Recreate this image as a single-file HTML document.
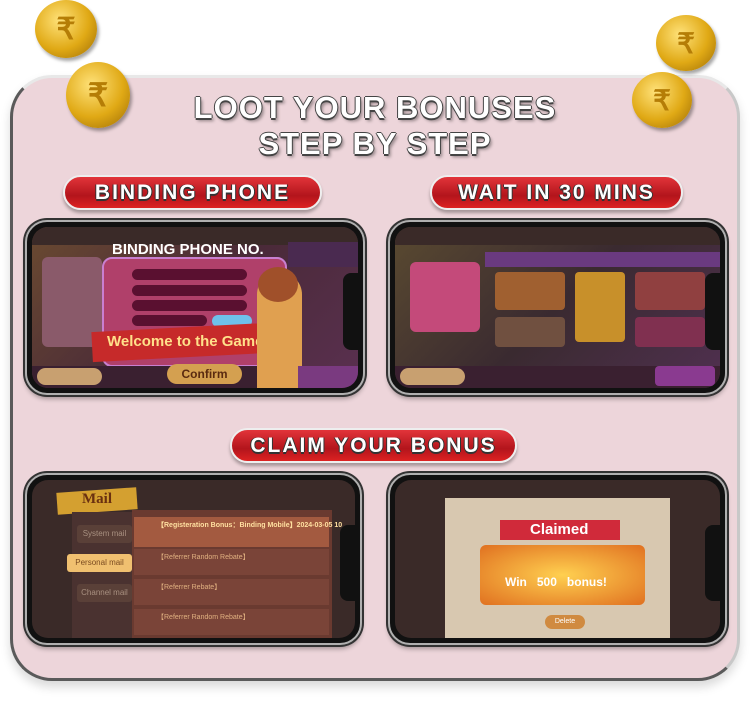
<!DOCTYPE html>
<html><head><style>
*{margin:0;padding:0;box-sizing:border-box}
body{width:750px;height:717px;background:#fff;position:relative;overflow:hidden;font-family:"Liberation Sans",sans-serif}
.card{position:absolute;left:10px;top:75px;width:730px;height:606px;border-radius:42px;background:#edd5da;border:3px solid #5a5a5a;border-top-color:#e8e8e8;border-right-color:#c8c8c8;box-shadow:0 6px 10px rgba(0,0,0,.15)}
.coin{position:absolute;border-radius:50%;background:radial-gradient(circle at 40% 35%,#ffe27a,#e0a915 55%,#9a6a05);box-shadow:2px 3px 3px rgba(0,0,0,.35)}
.coin span{position:absolute;inset:0;display:flex;align-items:center;justify-content:center;color:#b57d06;font-weight:bold}
.title{position:absolute;left:0;width:750px;text-align:center;color:#fff;font-weight:900;font-size:31px;letter-spacing:1px;text-shadow:0 2px 0 #444,1px 0 0 #444,-1px 0 0 #444,0 -1px 0 #444,2px 3px 3px rgba(0,0,0,.4)}
.pill{position:absolute;height:35px;border-radius:18px;background:linear-gradient(#e2343a,#b3151c 60%,#d22);border:2px solid #eee;box-shadow:0 3px 3px rgba(0,0,0,.3);color:#fff;font-weight:900;font-size:21px;letter-spacing:2px;text-align:center;line-height:31px;text-shadow:0 2px 0 #333,1px 0 0 #333,-1px 0 0 #333}
.phone{position:absolute;border-radius:22px;background:#111;border:2px solid #b0b0b0;box-shadow:0 0 0 2px #333,0 4px 5px rgba(0,0,0,.3)}
.scr{position:absolute;left:5px;top:5px;right:5px;bottom:5px;border-radius:16px;overflow:hidden}
.notch{position:absolute;right:4px;top:30%;width:16px;height:45%;background:#111;border-radius:8px 0 0 8px}
.t{position:absolute;font-weight:bold}
</style></head><body>
<div class="card"></div>
<div class="coin" style="left:35px;top:0;width:62px;height:58px"><span style="font-size:30px">₹</span></div>
<div class="coin" style="left:66px;top:62px;width:64px;height:66px"><span style="font-size:32px">₹</span></div>
<div class="coin" style="left:656px;top:15px;width:60px;height:56px"><span style="font-size:28px">₹</span></div>
<div class="coin" style="left:632px;top:72px;width:60px;height:56px"><span style="font-size:28px">₹</span></div>
<div class="title" style="top:90px">LOOT YOUR BONUSES</div>
<div class="title" style="top:126px">STEP BY STEP</div>
<div class="pill" style="left:63px;top:175px;width:259px">BINDING PHONE</div>
<div class="pill" style="left:430px;top:175px;width:253px">WAIT IN 30 MINS</div>
<div class="pill" style="left:230px;top:428px;width:287px">CLAIM YOUR BONUS</div>

<div class="phone" style="left:25px;top:220px;width:340px;height:175px">
 <div class="scr" style="background:linear-gradient(135deg,#6a4a30,#4a2a38 50%,#5a3050)">
  <div style="position:absolute;left:0;top:0;width:100%;height:18px;background:#3a2a28"></div>
  <div style="position:absolute;left:10px;top:30px;width:60px;height:90px;background:#8a5a6a;border-radius:6px"></div>
  <div style="position:absolute;left:70px;top:30px;width:185px;height:110px;background:#b0406a;border-radius:10px;border:2px solid #c97fd0"></div>
  <div class="t" style="left:80px;top:14px;color:#fff;font-size:15px">BINDING PHONE NO.</div>
  <div style="position:absolute;left:100px;top:42px;width:115px;height:11px;background:#5a1030;border-radius:6px"></div>
  <div style="position:absolute;left:100px;top:58px;width:115px;height:11px;background:#5a1030;border-radius:6px"></div>
  <div style="position:absolute;left:100px;top:73px;width:115px;height:11px;background:#5a1030;border-radius:6px"></div>
  <div style="position:absolute;left:100px;top:88px;width:75px;height:11px;background:#5a1030;border-radius:6px"></div>
  <div style="position:absolute;left:180px;top:88px;width:40px;height:12px;background:#6fc0ea;border-radius:6px"></div>
  <div style="position:absolute;left:60px;top:100px;width:195px;height:30px;background:#c62a2a;transform:rotate(-3deg)"></div>
  <div class="t" style="left:75px;top:106px;color:#ffe08a;font-size:15px">Welcome to the Game!</div>
  <div style="position:absolute;left:0;bottom:0;width:100%;height:22px;background:#3a2030"></div>
  <div style="position:absolute;left:5px;bottom:3px;width:65px;height:17px;background:#c8a070;border-radius:9px"></div>
  <div style="position:absolute;left:135px;bottom:4px;width:75px;height:20px;background:#d4a050;border-radius:10px;color:#5a2a10;font-size:12px;font-weight:bold;text-align:center;line-height:20px">Confirm</div>
  <div style="position:absolute;left:225px;top:45px;width:45px;height:120px;background:#e0a050;border-radius:25px 25px 5px 5px"></div>
  <div style="position:absolute;left:226px;top:40px;width:40px;height:35px;background:#a0502a;border-radius:50%"></div>
  <div style="position:absolute;right:0;top:15px;width:70px;height:25px;background:#4a2a50"></div>
  <div style="position:absolute;right:0;bottom:0;width:60px;height:22px;background:#7a3a80"></div>
 </div><div class="notch"></div></div>

<div class="phone" style="left:388px;top:220px;width:339px;height:175px">
 <div class="scr" style="background:linear-gradient(135deg,#5a4a30,#3a2a30 50%,#503050)">
  <div style="position:absolute;left:0;top:0;width:100%;height:18px;background:#3a2a28"></div>
  <div style="position:absolute;left:90px;top:25px;width:235px;height:15px;background:#6a3a80"></div>
  <div style="position:absolute;left:15px;top:35px;width:70px;height:70px;background:#c44a7a;border-radius:6px"></div>
  <div style="position:absolute;left:100px;top:45px;width:70px;height:38px;background:#a06030;border-radius:4px"></div>
  <div style="position:absolute;left:180px;top:45px;width:50px;height:70px;background:#c8902a;border-radius:4px"></div>
  <div style="position:absolute;left:240px;top:45px;width:70px;height:38px;background:#904040;border-radius:4px"></div>
  <div style="position:absolute;left:100px;top:90px;width:70px;height:30px;background:#705040;border-radius:4px"></div>
  <div style="position:absolute;left:240px;top:90px;width:70px;height:30px;background:#803050;border-radius:4px"></div>
  <div style="position:absolute;left:0;bottom:0;width:100%;height:22px;background:#3a2030"></div>
  <div style="position:absolute;left:5px;bottom:3px;width:65px;height:17px;background:#c8a070;border-radius:9px"></div>
  <div style="position:absolute;right:5px;bottom:2px;width:60px;height:20px;background:#8a3a90;border-radius:4px"></div>
 </div><div class="notch"></div></div>

<div class="phone" style="left:25px;top:473px;width:337px;height:172px">
 <div class="scr" style="background:#3a2a28">
  <div style="position:absolute;left:25px;top:10px;width:80px;height:22px;background:#d4a030;transform:rotate(-4deg)"></div>
  <div class="t" style="left:50px;top:11px;color:#6a3010;font-size:15px;font-family:'Liberation Serif',serif">Mail</div>
  <div style="position:absolute;left:40px;top:32px;width:68px;height:130px;background:#4a3230"></div>
  <div style="position:absolute;left:45px;top:45px;width:55px;height:18px;background:#5a4038;border-radius:3px;color:#a89080;font-size:8px;text-align:center;line-height:18px">System mail</div>
  <div style="position:absolute;left:35px;top:74px;width:65px;height:18px;background:#f0c070;border-radius:3px;color:#7a4a20;font-size:8px;text-align:center;line-height:18px">Personal mail</div>
  <div style="position:absolute;left:45px;top:104px;width:55px;height:18px;background:#5a4038;border-radius:3px;color:#a89080;font-size:8px;text-align:center;line-height:18px">Channel mail</div>
  <div style="position:absolute;left:100px;top:30px;width:200px;height:130px;background:#6a3a30"></div>
  <div style="position:absolute;left:102px;top:37px;width:195px;height:30px;background:#a35a40"></div>
  <div class="t" style="left:125px;top:40px;color:#ffe0a0;font-size:7px">【Registeration Bonus：Binding Mobile】2024-03-05 10</div>
  <div style="position:absolute;left:102px;top:69px;width:195px;height:26px;background:#7a4438"></div>
  <div class="t" style="left:125px;top:72px;color:#e0b080;font-size:7px;font-weight:normal">【Referrer Random Rebate】</div>
  <div style="position:absolute;left:102px;top:99px;width:195px;height:26px;background:#7a4438"></div>
  <div class="t" style="left:125px;top:102px;color:#e0b080;font-size:7px;font-weight:normal">【Referrer Rebate】</div>
  <div style="position:absolute;left:102px;top:129px;width:195px;height:26px;background:#7a4438"></div>
  <div class="t" style="left:125px;top:132px;color:#e0b080;font-size:7px;font-weight:normal">【Referrer Random Rebate】</div>
 </div><div class="notch"></div></div>

<div class="phone" style="left:388px;top:473px;width:339px;height:172px">
 <div class="scr" style="background:#3a2a28">
  <div style="position:absolute;left:50px;top:18px;width:225px;height:140px;background:#d8c8b0"></div>
  <div style="position:absolute;left:105px;top:40px;width:120px;height:20px;background:#d02a3a"></div>
  <div class="t" style="left:135px;top:41px;color:#fff;font-size:15px">Claimed</div>
  <div style="position:absolute;left:85px;top:65px;width:165px;height:60px;background:radial-gradient(#ffd050,#e07020);border-radius:6px"></div>
  <div class="t" style="left:110px;top:95px;color:#fff;font-size:12px">Win &nbsp; 500 &nbsp; bonus!</div>
  <div style="position:absolute;left:150px;top:135px;width:40px;height:14px;background:#d08a40;border-radius:7px;color:#fff;font-size:7px;text-align:center;line-height:14px">Delete</div>
 </div><div class="notch"></div></div>
</body></html>
